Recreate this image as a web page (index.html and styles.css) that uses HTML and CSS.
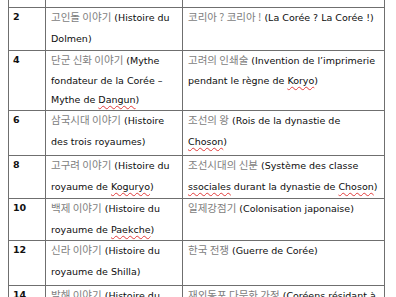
FILE: index.html
```html
<!DOCTYPE html>
<html lang="fr">
<head>
<meta charset="utf-8">
<link rel="stylesheet" href="styles.css">
<title>Liste</title>
</head>
<body>
<table class="list">
  <colgroup>
    <col class="c1">
    <col class="c2">
    <col class="c3">
  </colgroup>
  <tr class="r-top"><td class="num"></td><td></td><td></td></tr>
  <tr class="r42">
    <td class="num">2</td>
    <td><span class="ko">고인돌 이야기</span> (Histoire du<br>Dolmen)</td>
    <td><span class="ko">코리아 ? 코리아 !</span> (La Corée ? La Corée !)</td>
  </tr>
  <tr class="r59 tight">
    <td class="num">4</td>
    <td><span class="ko">단군 신화 이야기</span> (Mythe<br>fondateur de la Corée –<br>Mythe de <span class="sp">Dangun</span>)</td>
    <td><span class="ko">고려의 인쇄술</span> (Invention de l’imprimerie<br>pendant le règne de <span class="sp">Koryo</span>)</td>
  </tr>
  <tr class="r44">
    <td class="num">6</td>
    <td><span class="ko">삼국시대 이야기</span> (Histoire<br>des trois royaumes)</td>
    <td><span class="ko">조선의 왕</span> (Rois de la dynastie de<br><span class="sp">Choson</span>)</td>
  </tr>
  <tr class="r42">
    <td class="num">8</td>
    <td><span class="ko">고구려 이야기</span> (Histoire du<br>royaume de <span class="sp">Koguryo</span>)</td>
    <td><span class="ko">조선시대의 신분</span> (Système des classe<br><span class="sp">ssociales</span> durant la dynastie de <span class="sp">Choson</span>)</td>
  </tr>
  <tr class="r41">
    <td class="num">10</td>
    <td><span class="ko">백제 이야기</span> (Histoire du<br>royaume de <span class="sp">Paekche</span>)</td>
    <td><span class="ko">일제강점기</span> (Colonisation japonaise)</td>
  </tr>
  <tr class="r44">
    <td class="num">12</td>
    <td><span class="ko">신라 이야기</span> (Histoire du<br>royaume de Shilla)</td>
    <td><span class="ko">한국 전쟁</span> (Guerre de Corée)</td>
  </tr>
  <tr class="r42">
    <td class="num">14</td>
    <td><span class="ko">발해 이야기</span> (Histoire du<br>royaume de Parhae)</td>
    <td><span class="ko">재외동포 다문화 가정</span> (Coréens résidant à<br>l’étranger)</td>
  </tr>
</table>
</body>
</html>
```

FILE: styles.css
```css
html, body {
  margin: 0;
  padding: 0;
  background: #ffffff;
}

body {
  overflow: hidden;
  height: 297px;
}

.list {
  margin-left: 8px;
  border-collapse: separate;
  border-spacing: 0;
  font-family: "DejaVu Sans", "Noto Sans CJK KR", sans-serif;
  font-size: 9.5px;
  color: #0d0d0d;
  table-layout: fixed;
  width: 377px;
}

.c1 { width: 38px; }
.c2 { width: 137px; }
.c3 { width: 202px; }

.list td {
  box-sizing: border-box;
  border-right: 1px solid #6f6f6f;
  border-bottom: 1px solid #6f6f6f;
  vertical-align: top;
  padding: 0 3px 0 5px;
  line-height: 20.5px;
  white-space: nowrap;
  overflow: hidden;
}

.list td:first-child {
  border-left: 1px solid #6f6f6f;
  padding-left: 4px;
}

.r-top td {
  height: 8px;
  padding: 0;
  line-height: 7px;
}

.r41 td { height: 42px; }
.r42 td { height: 43px; }
.r44 td { height: 45px; }
.r59 td { height: 60px; }

.tight td {
  line-height: 19.5px;
}

.list td.num {
  font-weight: bold;
  color: #111;
  line-height: 14px;
  padding-top: 2px;
}

.list .r-top td.num {
  padding: 0;
  line-height: 7px;
}

.ko {
  font-family: "Noto Sans CJK KR", sans-serif;
  color: #7d7d7d;
  font-size: 10.5px;
  line-height: 1;
}

.sp {
  text-decoration: underline wavy #e23b3b;
  text-decoration-thickness: 1px;
  text-underline-offset: 2px;
}
```
